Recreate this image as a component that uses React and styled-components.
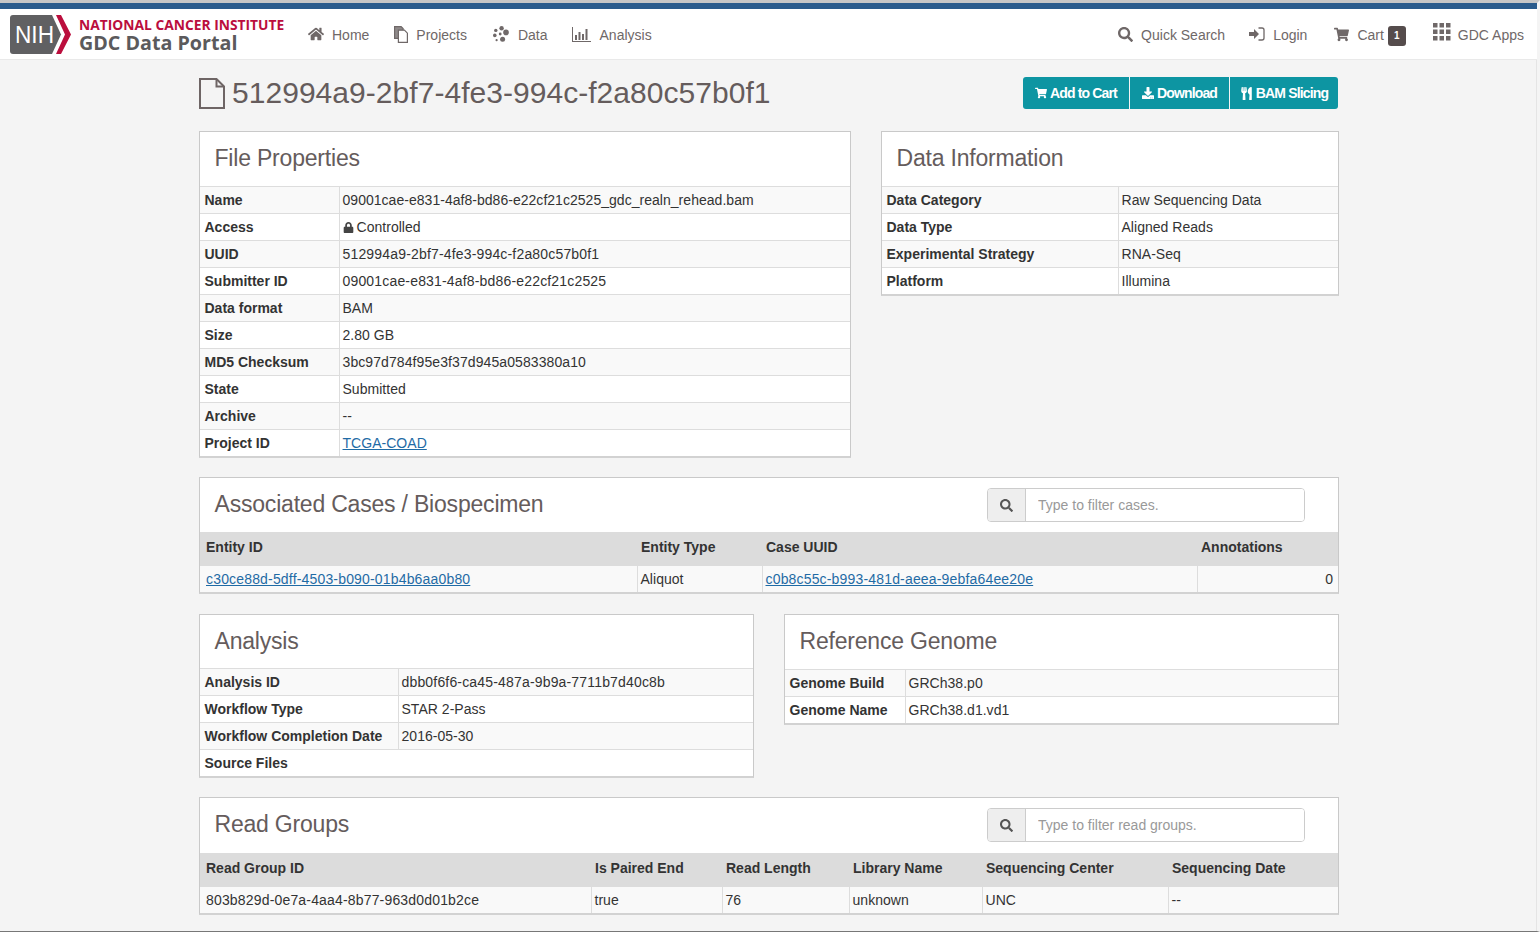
import React from "react";
import styled, { createGlobalStyle } from "styled-components";
import { FaHome, FaSearch, FaShoppingCart, FaDownload, FaUtensils, FaLock } from "react-icons/fa";

const Global = createGlobalStyle`
  html, body { margin: 0; padding: 0; background: #f4f4f4; }
  body { font-family: "Liberation Sans", Arial, sans-serif; font-size: 14px; color: #333; overflow: hidden; }
  * { box-sizing: border-box; }
`;
const Page = styled.div`
  width: 1540px; height: 932px; position: relative; overflow: hidden;
  border-top: 3px solid #c6c6c6; border-bottom: 1px solid #777; border-right: 3px solid #f4f4f4;
  box-shadow: inset -1px 0 0 #e4e4e4;
  display: flex; flex-direction: column;
`;
const TopBar = styled.div`height: 6px; background: #2a5b8c; margin-right: -3px;`;
const Nav = styled.nav`
  height: 51px; background: #fff; border-bottom: 1px solid #e9e9e9; display: flex; align-items: center;
  padding: 2px 0 0 10px; color: #6f6868; flex-shrink: 0;
`;
const Logo = styled.div`display: flex; align-items: center; gap: 8px; width: 298px; flex-shrink: 0; margin-top: -2px;`;
const LogoLines = styled.div`display: flex; flex-direction: column;`;
const Nci = styled.span`color: #bb0e3d; font-family: "Open Sans", sans-serif; font-weight: 700; font-size: 13.8px; line-height: 16px; white-space: nowrap;`;
const Portal = styled.span`color: #5b5a5c; font-family: "Open Sans", sans-serif; font-weight: 700; font-size: 19.7px; line-height: 19px; white-space: nowrap;`;
const NavItem = styled.a`
  display: flex; align-items: center; gap: ${p => p.$gap || 8}px; margin-right: ${p => p.$mr || 0}px;
  color: #6f6868; font-size: 14px; white-space: nowrap;
  svg { flex-shrink: 0; margin-top: -2px; }
`;
const NavRight = styled.div`margin-left: auto; display: flex; align-items: center; padding-right: 13px;`;
const Badge = styled.span`
  width: 18px; height: 20px; background: #554c4c; color: #fff; border-radius: 3px; font-size: 10px; font-weight: 700;
  display: inline-flex; align-items: center; justify-content: center; margin-left: -4px; margin-top: 1px;
`;
const Main = styled.main`width: 1140px; margin-left: 199px; padding-top: 17px;`;
const TitleRow = styled.div`display: flex; justify-content: space-between; height: 54px;`;
const Title = styled.h1`
  margin: 0; font-weight: 400; font-size: 30px; line-height: 32px; color: #655c5c; display: flex; align-items: center; gap: 7px; height: 32px; letter-spacing: .04px;
`;
const BtnGroup = styled.div`display: flex; gap: 1px; margin-right: 1px; height: 32px;`;
const Btn = styled.button`
  width: ${p => p.$w}px; height: 32px; background: #0d95a2; color: #fff; border: 0; padding: 0; font: 700 14px "Liberation Sans", sans-serif; letter-spacing: -.85px;
  display: flex; align-items: center; justify-content: center; gap: 3px;
  &:first-child { border-radius: 3px 0 0 3px; } &:last-child { border-radius: 0 3px 3px 0; }
`;
const Row = styled.div`display: flex; justify-content: space-between; align-items: flex-start; margin-bottom: ${p => p.$mb}px;`;
const Panel = styled.section`
  width: ${p => p.$w || 1140}px; background: #fff; border: 1px solid #c9c9c9; border-bottom-width: 2px; border-bottom-color: #d2d2d2;
  margin-bottom: ${p => p.$mb || 0}px;
`;
const Head = styled.div`
  height: ${p => p.$h || 54}px; display: flex; align-items: center; justify-content: space-between;
  padding: 0 33px ${p => (p.$h === 55 ? 1 : 0)}px 14.5px;
`;
const H2 = styled.h2`margin: -1px 0 0; font-weight: 400; font-size: 23px; color: #655c5c; letter-spacing: -.2px;`;
const Search = styled.div`display: flex; width: 318px; height: 34px; border: 1px solid #ccc; border-radius: 4px; overflow: hidden; background: #fff;`;
const Addon = styled.div`width: 38px; background: #eee; border-right: 1px solid #ccc; display: flex; align-items: center; justify-content: center; color: #555;`;
const Input = styled.input`
  flex: 1; border: 0; outline: 0; padding: 0 12px; font: 14px "Liberation Sans", sans-serif;
  &::placeholder { color: #999; opacity: 1; }
`;
const Table = styled.table`width: 100%; border-collapse: collapse; table-layout: fixed;`;
const Tr = styled.tr`
  background: ${p => (p.$odd ? "#f9f9f9" : "#fff")};
  & + & { border-top: 1px solid #ddd; }
`;
const Th = styled.th`
  text-align: left; font-weight: 700; padding: 5px 5px 5px 4.5px; height: 26px; line-height: 16px; font-size: 14px; white-space: nowrap; overflow: hidden;
  border-right: ${p => (p.$solo ? "0" : "1px solid #ddd")};
`;
const Td = styled.td`
  padding: 5px 3px; height: 26px; line-height: 16px; font-size: 14px; white-space: nowrap; letter-spacing: .03px;
`;
const KvRows = styled.tbody`border-top: 1px solid #ddd;`;
const HeadRow = styled.tr`background: #dcdcdc;`;
const Hc = styled.th`
  text-align: left; font-weight: 700; height: 34px; padding: 0 4px 4px; font-size: 14px; line-height: 16px; white-space: nowrap; color: #333;
  &:first-child { padding-left: 6px; }
`;
const Bc = styled.td`
  height: 26px; padding: 0 3px; font-size: 14px; line-height: 16px; white-space: nowrap; background: #f9f9f9; letter-spacing: .03px;
  border-left: 1px solid #ddd; text-align: ${p => (p.$right ? "right" : "left")}; padding-right: ${p => (p.$right ? 5 : 3)}px;
  &:first-child { border-left: 0; padding-left: 6px; }
`;
const A = styled.a`color: #1f6ba5; text-decoration: underline;`;
const Uuid = styled.span`letter-spacing: ${p => p.$ls || 0.17}px;`;
const Lock = styled.span`display: inline-flex; vertical-align: -1px; margin: 0 3px 0 0;`;

function Kv({ first, rows }) {
  return (
    <Table>
      <colgroup><col style={{ width: first }} /><col /></colgroup>
      <KvRows>
        {rows.map(([k, v], i) => (
          <Tr key={k} $odd={i % 2 === 0}>
            {v == null ? <Th colSpan={2} $solo>{k}</Th> : <><Th>{k}</Th><Td>{v}</Td></>}
          </Tr>
        ))}
      </KvRows>
    </Table>
  );
}
function DataTable({ cols, head, cells, right }) {
  return (
    <Table>
      <colgroup>{cols.map((c, i) => <col key={i} style={{ width: c }} />)}</colgroup>
      <thead><HeadRow>{head.map(h => <Hc key={h}>{h}</Hc>)}</HeadRow></thead>
      <tbody><tr>{cells.map((c, i) => <Bc key={i} $right={right === i}>{c}</Bc>)}</tr></tbody>
    </Table>
  );
}
const ProjectsIcon = () => (
  <svg width="14" height="17" viewBox="0 0 14 17" fill="#fff" stroke="#6f6868" strokeWidth="1.2">
    <path d="M.6.6h6.5l2 2v9.8H.6z" fill="#8f8a8a" /><path d="M4.4 4.2h6l3 3v9.2H4.4z" />
  </svg>
);
const DataIcon = () => (
  <svg width="16" height="16" viewBox="0 0 16 16" fill="#6f6868">
    <circle cx="8.6" cy="2.2" r="2.2" /><circle cx="2.8" cy="4.4" r="1.7" /><circle cx="13" cy="6.4" r="2.8" />
    <circle cx="1.8" cy="9.4" r="1.8" /><circle cx="7.2" cy="8" r="1.4" /><circle cx="9.6" cy="13.2" r="2.5" /><circle cx="3.6" cy="14.2" r="1.1" />
  </svg>
);
const ChartIcon = () => (
  <svg width="19" height="15" viewBox="0 0 19 15" fill="#6f6868">
    <path d="M0 0h1v14h18v1H0z" /><rect x="3" y="8" width="2" height="5" /><rect x="6.5" y="5" width="2" height="8" /><rect x="10" y="7" width="2" height="6" /><rect x="13.5" y="2" width="2" height="11" />
  </svg>
);
const LoginIcon = () => (
  <svg width="16" height="14" viewBox="0 0 16 14" fill="#6f6868">
    <path d="M0 5h5V2l5 5-5 5V9H0z" />
    <path d="M9.5 1H13a2 2 0 0 1 2 2v8a2 2 0 0 1-2 2H9.5" fill="none" stroke="#6f6868" strokeWidth="1.3" />
  </svg>
);
const AppsIcon = () => (
  <svg width="18" height="18" viewBox="0 0 18 18" fill="#6f6868" style={{ marginTop: -6 }}>
    {[0, 6.5, 13].flatMap(y => [0, 6.5, 13].map(x => <rect key={`${x}-${y}`} x={x} y={y} width="4.5" height="4.5" />))}
  </svg>
);
const FileIcon = () => (
  <svg width="26" height="31" viewBox="0 0 26 31" fill="none" stroke="#6e6565" strokeWidth="2">
    <path d="M1 1h16.5L25 8.5V30H1z" /><path d="M17.5 1v7.5H25" />
  </svg>
);
const NihLogo = () => (
  <svg width="61" height="39" viewBox="0 0 61 39">
    <path d="M3 0h39l9 19.5L42 39H3a3 3 0 0 1-3-3V3a3 3 0 0 1 3-3z" fill="#606062" />
    <path d="M46 0h5l10 19.5L51 39h-5l9-19.5z" fill="#bb0e3d" />
    <text x="5" y="28" fontFamily="'Liberation Sans', sans-serif" fontSize="23" fill="#fff" textLength="39" lengthAdjust="spacingAndGlyphs">NIH</text>
  </svg>
);

export default function App() {
  return (
    <Page>
      <Global />
      <TopBar />
      <Nav>
        <Logo>
          <NihLogo />
          <LogoLines>
            <Nci>NATIONAL CANCER INSTITUTE</Nci>
            <Portal>GDC Data Portal</Portal>
          </LogoLines>
        </Logo>
        <NavItem $mr={25}><FaHome size={16} />Home</NavItem>
        <NavItem $mr={26}><ProjectsIcon />Projects</NavItem>
        <NavItem $mr={24} $gap={9}><DataIcon />Data</NavItem>
        <NavItem $gap={9}><ChartIcon />Analysis</NavItem>
        <NavRight>
          <NavItem $mr={24}><FaSearch size={15} />Quick Search</NavItem>
          <NavItem $mr={27}><LoginIcon />Login</NavItem>
          <NavItem $mr={27}><FaShoppingCart size={15} />Cart<Badge>1</Badge></NavItem>
          <NavItem $gap={7}><AppsIcon />GDC Apps</NavItem>
        </NavRight>
      </Nav>
      <Main>
        <TitleRow>
          <Title><FileIcon />512994a9-2bf7-4fe3-994c-f2a80c57b0f1</Title>
          <BtnGroup>
            <Btn $w={106}><FaShoppingCart size={12} />Add to Cart</Btn>
            <Btn $w={99}><FaDownload size={12} />Download</Btn>
            <Btn $w={108}><FaUtensils size={13} />BAM Slicing</Btn>
          </BtnGroup>
        </TitleRow>
        <Row $mb={19}>
          <Panel $w={652}>
            <Head><H2>File Properties</H2></Head>
            <Kv first={139} rows={[
              ["Name", "09001cae-e831-4af8-bd86-e22cf21c2525_gdc_realn_rehead.bam"],
              ["Access", <><Lock><FaLock size={11} color="#444" /></Lock>Controlled</>],
              ["UUID", <Uuid>512994a9-2bf7-4fe3-994c-f2a80c57b0f1</Uuid>],
              ["Submitter ID", <Uuid>09001cae-e831-4af8-bd86-e22cf21c2525</Uuid>],
              ["Data format", "BAM"],
              ["Size", "2.80 GB"],
              ["MD5 Checksum", <Uuid $ls={0.09}>3bc97d784f95e3f37d945a0583380a10</Uuid>],
              ["State", "Submitted"],
              ["Archive", "--"],
              ["Project ID", <A>TCGA-COAD</A>],
            ]} />
          </Panel>
          <Panel $w={458}>
            <Head><H2>Data Information</H2></Head>
            <Kv first={236} rows={[
              ["Data Category", "Raw Sequencing Data"],
              ["Data Type", "Aligned Reads"],
              ["Experimental Strategy", "RNA-Seq"],
              ["Platform", "Illumina"],
            ]} />
          </Panel>
        </Row>
        <Panel $mb={20}>
          <Head>
            <H2>Associated Cases / Biospecimen</H2>
            <Search><Addon><FaSearch size={13} /></Addon><Input placeholder="Type to filter cases." /></Search>
          </Head>
          <DataTable
            cols={[437, 125, 435, 141]}
            head={["Entity ID", "Entity Type", "Case UUID", "Annotations"]}
            cells={[<A><Uuid>c30ce88d-5dff-4503-b090-01b4b6aa0b80</Uuid></A>, "Aliquot", <A><Uuid>c0b8c55c-b993-481d-aeea-9ebfa64ee20e</Uuid></A>, "0"]}
            right={3}
          />
        </Panel>
        <Row $mb={19}>
          <Panel $w={555}>
            <Head $h={53}><H2>Analysis</H2></Head>
            <Kv first={198} rows={[
              ["Analysis ID", <Uuid>dbb0f6f6-ca45-487a-9b9a-7711b7d40c8b</Uuid>],
              ["Workflow Type", "STAR 2-Pass"],
              ["Workflow Completion Date", "2016-05-30"],
              ["Source Files", null],
            ]} />
          </Panel>
          <Panel $w={555}>
            <Head><H2>Reference Genome</H2></Head>
            <Kv first={120} rows={[
              ["Genome Build", "GRCh38.p0"],
              ["Genome Name", "GRCh38.d1.vd1"],
            ]} />
          </Panel>
        </Row>
        <Panel>
          <Head $h={55}>
            <H2>Read Groups</H2>
            <Search><Addon><FaSearch size={13} /></Addon><Input placeholder="Type to filter read groups." /></Search>
          </Head>
          <DataTable
            cols={[391, 131, 127, 133, 186, 170]}
            head={["Read Group ID", "Is Paired End", "Read Length", "Library Name", "Sequencing Center", "Sequencing Date"]}
            cells={[<Uuid>803b829d-0e7a-4aa4-8b77-963d0d01b2ce</Uuid>, "true", "76", "unknown", "UNC", "--"]}
          />
        </Panel>
      </Main>
    </Page>
  );
}
